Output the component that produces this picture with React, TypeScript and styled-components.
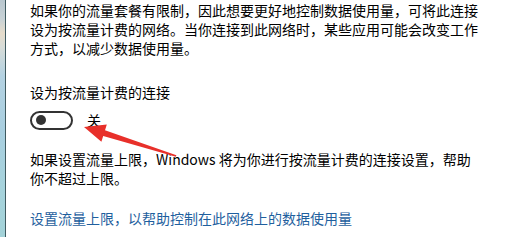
import React from "react";
import styled, { createGlobalStyle } from "styled-components";

const Global = createGlobalStyle`
  html, body { margin: 0; padding: 0; background: #ffffff; }
  body { width: 521px; height: 237px; overflow: hidden; }
`;

const Page = styled.div`
  position: relative;
  display: flex;
  width: 521px;
  height: 237px;
  background: #ffffff;
  font-family: "Noto Sans CJK SC", "Microsoft YaHei", sans-serif;
  color: #000000;
`;

const DesktopEdge = styled.div`
  width: 5px;
  flex: none;
  background: linear-gradient(
    180deg,
    #b9c7cf 0%,
    #c8d2d6 8%,
    #e6dccb 14%,
    #d7dcd8 20%,
    #b4d2e2 32%,
    #a9cfe0 55%,
    #a6d3dc 80%,
    #a3d2d8 100%
  );
  border-right: 1px solid #3f5a60;
`;

const Content = styled.div`
  flex: 1;
  padding: 1px 0 0 24px;
  display: flex;
  flex-direction: column;
`;

const Paragraph = styled.p<{ $top?: number }>`
  margin: ${(p) => p.$top ?? 0}px 0 0;
  font-size: 14px;
  line-height: 19px;
  white-space: nowrap;
`;

const Heading = styled.div`
  margin-top: 25px;
  font-size: 14px;
  line-height: 19px;
`;

const ToggleRow = styled.div`
  margin-top: 8px;
  display: flex;
  align-items: center;
  gap: 14px;
  height: 20px;
`;

const Track = styled.div`
  box-sizing: border-box;
  width: 43px;
  height: 19px;
  border: 2px solid #333333;
  border-radius: 10px;
  display: flex;
  align-items: center;
  padding-left: 4px;
`;

const Knob = styled.div`
  width: 10px;
  height: 10px;
  border-radius: 50%;
  background: #333333;
`;

const ToggleLabel = styled.span`
  font-size: 14px;
  line-height: 19px;
`;

const Link = styled.a`
  margin-top: 21px;
  font-size: 14px;
  line-height: 19px;
  color: #1f5f9e;
  text-decoration: none;
  cursor: pointer;
`;

const Arrow = styled.svg`
  position: absolute;
  left: 0;
  top: 0;
  pointer-events: none;
`;

export default function App() {
  return (
    <>
      <Global />
      <Page>
        <DesktopEdge />
        <Content>
          <Paragraph>
            如果你的流量套餐有限制，因此想要更好地控制数据使用量，可将此连接
            <br />
            设为按流量计费的网络。当你连接到此网络时，某些应用可能会改变工作
            <br />
            方式，以减少数据使用量。
          </Paragraph>
          <Heading>设为按流量计费的连接</Heading>
          <ToggleRow>
            <Track>
              <Knob />
            </Track>
            <ToggleLabel>关</ToggleLabel>
          </ToggleRow>
          <Paragraph $top={20}>
            如果设置流量上限，Windows 将为你进行按流量计费的连接设置，帮助
            <br />
            你不超过上限。
          </Paragraph>
          <Link>设置流量上限，以帮助控制在此网络上的数据使用量</Link>
        </Content>
        <Arrow width="521" height="237" viewBox="0 0 521 237">
          <polygon
            points="84,127 106.8,124.5 105,130.2 176.4,155.2 175.8,156.8 103.2,136 101.4,141.7"
            fill="#e8302a"
          />
        </Arrow>
      </Page>
    </>
  );
}
